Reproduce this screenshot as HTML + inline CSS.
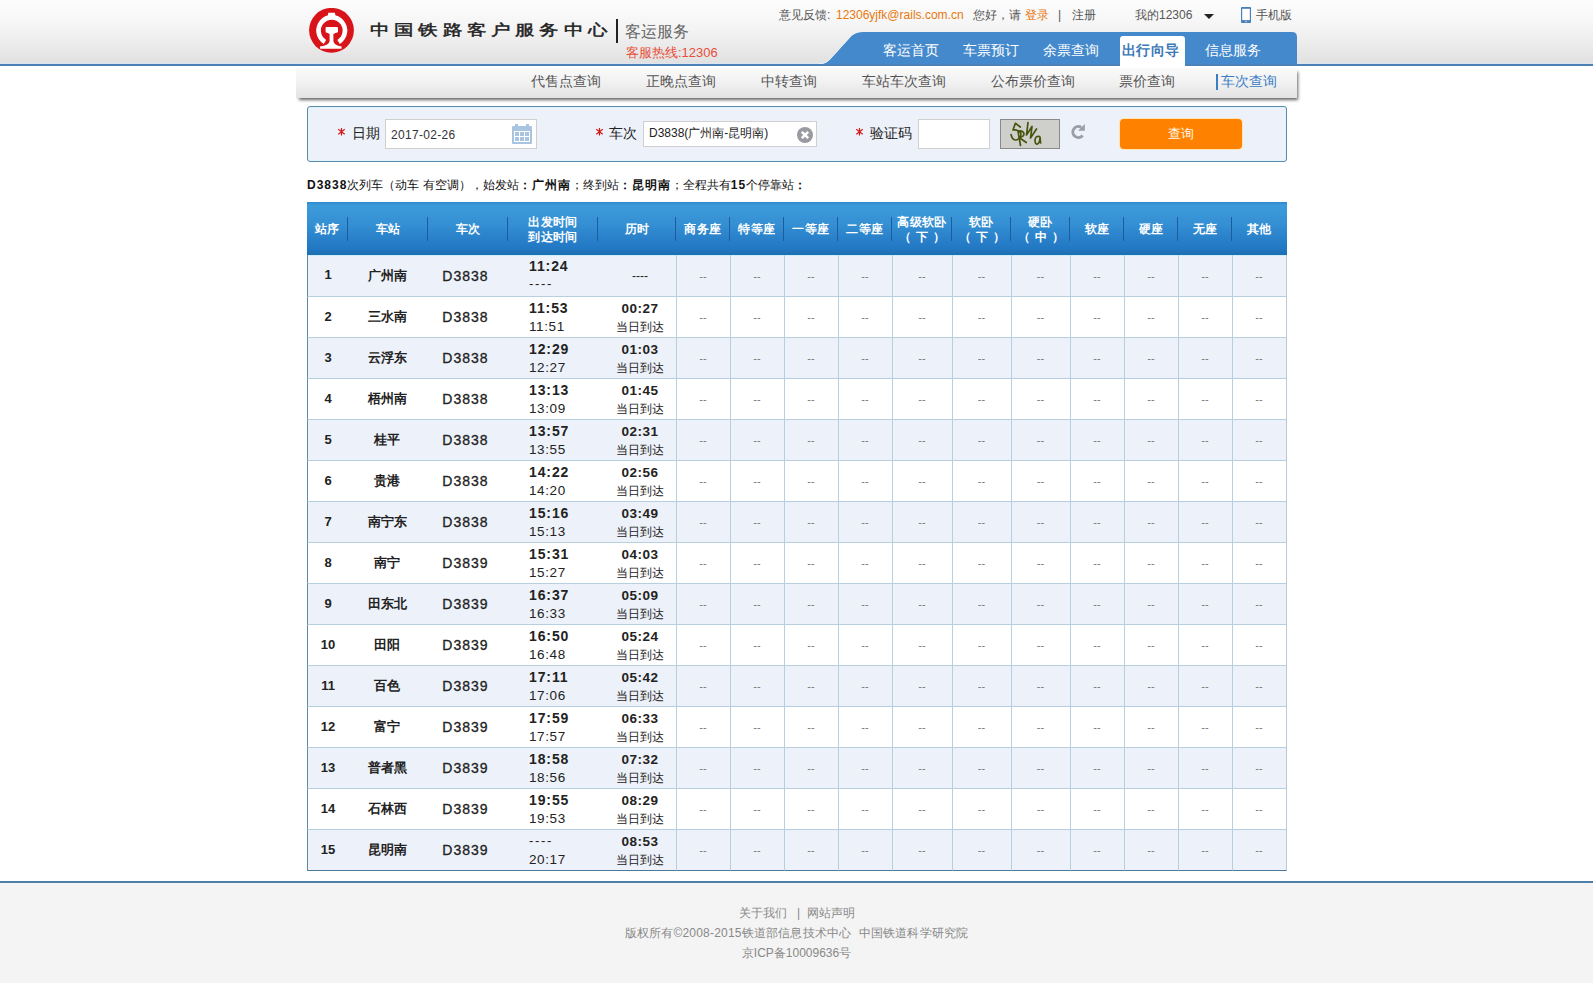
<!DOCTYPE html>
<html><head><meta charset="utf-8">
<style>
*{margin:0;padding:0;box-sizing:border-box}
html,body{width:1593px;height:983px;overflow:hidden;background:#fff;font-family:"Liberation Sans",sans-serif;font-size:12px;color:#333}
.a{position:absolute;white-space:nowrap}
#hdr{position:absolute;left:0;top:0;width:1593px;height:63px;background:linear-gradient(#fdfdfd,#f4f4f4 45%,#e1e1e1)}
#hl0{position:absolute;left:0;top:63px;width:1593px;height:1px;background:#dde6f0}
#hline{position:absolute;left:0;top:64px;width:1593px;height:2px;background:#4a82b8}
#logo{position:absolute;left:309px;top:8px;width:45px;height:45px}
#sitename{position:absolute;left:370px;top:19px;font-size:19px;line-height:22px;font-weight:normal;-webkit-text-stroke:.6px #222;letter-spacing:5.2px;color:#222;transform:scaleY(.77);transform-origin:0 50%}
#vbar{position:absolute;left:616px;top:19px;width:2px;height:24px;background:#222}
#svc{position:absolute;left:625px;top:22px;font-size:16px;line-height:20px;color:#666}
#hot{position:absolute;left:626px;top:45px;font-size:13px;line-height:16px;color:#e94e3a}
.tl{position:absolute;top:8px;font-size:12px;line-height:15px;color:#555;white-space:nowrap}
.or{color:#e8780e}
#tab{position:absolute;left:815px;top:32px;width:482px;height:34px}
.nav{position:absolute;top:42px;font-size:14px;line-height:17px;color:#fff;white-space:nowrap}
#sub{position:absolute;left:296px;top:68px;width:1001px;height:30px;background:linear-gradient(#fafafa,#f2f2f2 45%,#e3e3e3);box-shadow:2px 3px 3px -1px rgba(0,0,0,.6)}
.sn{position:absolute;top:73px;font-size:14px;line-height:17px;color:#555;white-space:nowrap}
#form{position:absolute;left:307px;top:106px;width:980px;height:56px;border:1px solid #5a8aa8;border-radius:3px;background:#edf1f9;box-shadow:inset 0 0 0 1px #dff4fc}
.lbl{position:absolute;top:125px;font-size:14px;line-height:17px;color:#222;white-space:nowrap}
.star{position:absolute;top:126px;font-size:14px;line-height:17px;color:#d9222a}
.inp{position:absolute;background:#fff;border:1px solid #cfcfcf}
#summary{position:absolute;left:307px;top:178px;font-size:12px;line-height:15px;color:#111;white-space:nowrap}
#summary b{letter-spacing:1px}

#tbl{position:absolute;left:307px;top:202px;width:980px;border-collapse:separate;border-spacing:0;table-layout:fixed}
#tbl td.no{border-left:1px solid #5a8aa8}
#tbl td.r{border-right:1px solid #b8c8d4}
#tbl th{height:53px;color:#fff;font-size:12px;font-weight:bold;line-height:15px;background:linear-gradient(#2f88ca,#3d9bda 6%,#3590d4 40%,#2176c2 90%,#1e6fae);padding:2px 0 0;text-align:center;position:relative;box-sizing:border-box}
#tbl th{letter-spacing:.4px}
#tbl th .p{letter-spacing:5px;margin-right:-5px}
#tbl th i{position:absolute;right:0;top:15px;width:1px;height:24px;background:#1d5d9c}
#tbl td{height:41px;text-align:center;padding:0;font-size:12px;color:#222;border-bottom:1px solid #b7cfdf;box-sizing:border-box;vertical-align:middle}
#tbl tr.o td{background:#edf1f9}
#tbl tr.e td{background:#fff}
#tbl tr.f td{height:42px;box-shadow:inset 0 1px #cdeefa}
#tbl tr.l td{border-bottom-color:#4a7a98}
#tbl td.s{border-left:1px solid #b7cfdf;color:#777;font-size:11px;padding-right:1px}
#tbl td.no{font-size:13px;font-weight:bold;padding-bottom:2px}
#tbl td.st{font-size:13px;font-weight:bold;padding-right:2px}
#tbl td.tr{font-size:14px;letter-spacing:1px;padding-right:5px;-webkit-text-stroke:.3px #222}
#tbl td.tm{text-align:left;padding:1px 0 0 21px;line-height:17px}
#tbl td.tm b{font-size:14px;letter-spacing:.9px}
#tbl td.tm .ar{font-size:13.5px;letter-spacing:.6px}
#tbl td.du{line-height:18px;padding:2px 0 0 6px}
#tbl td.du b{font-size:13.5px;letter-spacing:.5px}
#tbl td.du .nt{font-size:12px}
#tbl td.tm .da,#tbl td.tm .dd{font-size:13px;letter-spacing:1.7px;position:relative;top:-1px}
#tbl td.du .dash4{position:relative;top:-1px}
#footer{position:absolute;left:0;top:881px;width:1593px;height:102px;background:#f4f4f4;border-top:2px solid #4f7fa8}
.ft{position:absolute;left:0;width:1593px;text-align:center;font-size:12px;line-height:15px;color:#888;white-space:nowrap}
</style></head><body>

<div id="hdr"></div><div id="hl0"></div><div id="hline"></div>
<svg id="logo" viewBox="0 0 45 45">
<circle cx="22.5" cy="22.3" r="22.4" fill="#d8141a"/>
<path d="M15.9 33.9 A13.2 13.2 0 1 1 29.6 33.9" fill="none" stroke="#fff" stroke-width="4.7"/>
<path d="M18.6 8.6 L19.3 4.8 L25.9 4.8 L26.6 8.6 Z" fill="#fff"/>
<path d="M17.4 19.1 L28.2 19.1 Q29 19.1 29 20 L29 24.2 Q26.2 24.8 24.4 26 L24.4 33 Q24.6 37 31.5 38.3 L32.5 38.3 L32.5 40.8 L11.1 40.8 L11.1 38.3 L12.5 38.3 Q20.4 37 20.6 33 L20.6 26 Q18.8 24.8 16.6 24.2 L16.6 20 Q16.6 19.1 17.4 19.1 Z" fill="#fff"/>
</svg>
<div id="sitename" class="a">中国铁路客户服务中心</div>
<div id="vbar"></div>
<div id="svc" class="a">客运服务</div>
<div id="hot" class="a">客服热线:12306</div>

<div class="tl" style="left:779px">意见反馈:</div>
<div class="tl or" style="left:836px">12306yjfk@rails.com.cn</div>
<div class="tl" style="left:973px">您好，请</div>
<div class="tl or" style="left:1025px">登录</div>
<div class="tl" style="left:1058px">|</div>
<div class="tl" style="left:1072px">注册</div>
<div class="tl" style="left:1135px">我的12306</div>
<svg class="a" style="left:1204px;top:14px" width="10" height="5" viewBox="0 0 10 5"><path d="M0 0 L10 0 L5 5 Z" fill="#222"/></svg>
<svg class="a" style="left:1241px;top:7px" width="10" height="16" viewBox="0 0 10 16"><rect x="0" y="0" width="10" height="16" rx="0.8" fill="#4a7fb8"/><rect x="1.2" y="1.8" width="7.6" height="11.3" fill="#fff"/><rect x="4" y="14.1" width="2" height="1" fill="#b5cce8"/></svg>
<div class="tl" style="left:1256px">手机版</div>

<svg id="tab" viewBox="0 0 482 34">
<path d="M0 32 L4 32 C10 32 13 30 16 26.5 L35 5.5 C38 2 42 0 48 0 L477 0 Q482 0 482 5 L482 34 L0 34 Z" fill="#4489cb"/>
<path d="M4 31.5 C10 31.5 13 29.5 16 26 L35 5 C38 1.5 42 -0.5 48 -0.5 L477 -0.5" fill="none" stroke="#e9f1fb" stroke-width="1"/>
<path d="M0 32 L482 32 L482 34 L0 34 Z" fill="#4a82b8"/>
<path d="M305 34 L305 7 Q305 4 308 4 L367 4 Q370 4 370 7 L370 34 Z" fill="#fff"/>
</svg>
<div class="nav" style="left:883px">客运首页</div>
<div class="nav" style="left:963px">车票预订</div>
<div class="nav" style="left:1043px">余票查询</div>
<div class="nav" style="left:1122px;color:#3a78b8;font-weight:bold;letter-spacing:.3px">出行向导</div>
<div class="nav" style="left:1205px">信息服务</div>

<div id="sub"></div>
<div class="sn" style="left:531px">代售点查询</div>
<div class="sn" style="left:646px">正晚点查询</div>
<div class="sn" style="left:761px">中转查询</div>
<div class="sn" style="left:862px">车站车次查询</div>
<div class="sn" style="left:991px">公布票价查询</div>
<div class="sn" style="left:1119px">票价查询</div>
<div class="a" style="left:1216px;top:74px;width:2px;height:16px;background:#3a7dc4"></div>
<div class="sn" style="left:1221px;color:#3a7dc4">车次查询</div>

<div id="form"></div>
<svg class="a" style="left:338px;top:128px" width="8" height="8" viewBox="0 0 8 8"><path d="M3.5 0 V7.5 M0.3 1.2 L6.7 6.3 M6.7 1.2 L0.3 6.3" stroke="#d41515" stroke-width="1.15"/></svg><div class="lbl" style="left:352px">日期</div>
<div class="inp" style="left:385px;top:119px;width:152px;height:30px"></div>
<div class="a" style="left:391px;top:128px;font-size:12px;line-height:14px;color:#333;letter-spacing:.3px">2017-02-26</div>
<svg class="a" style="left:512px;top:124px" width="20" height="20" viewBox="0 0 20 20">
<rect x="0" y="2" width="20" height="18" rx="1" fill="#a9c4e0"/>
<rect x="3" y="0" width="3" height="4" fill="#a9c4e0"/><rect x="14" y="0" width="3" height="4" fill="#a9c4e0"/>
<g fill="#fff"><rect x="2" y="7" width="16" height="11"/></g>
<g fill="#a9c4e0"><rect x="3" y="8" width="4" height="4"/><rect x="8" y="8" width="4" height="4"/><rect x="13" y="8" width="4" height="4"/><rect x="3" y="13" width="4" height="4"/><rect x="8" y="13" width="4" height="4"/><rect x="13" y="13" width="4" height="4"/></g>
</svg>
<svg class="a" style="left:596px;top:128px" width="8" height="8" viewBox="0 0 8 8"><path d="M3.5 0 V7.5 M0.3 1.2 L6.7 6.3 M6.7 1.2 L0.3 6.3" stroke="#d41515" stroke-width="1.15"/></svg><div class="lbl" style="left:609px">车次</div>
<div class="inp" style="left:643px;top:121px;width:174px;height:26px"></div>
<div class="a" style="left:649px;top:126px;font-size:12px;line-height:15px;color:#222">D3838(广州南-昆明南)</div>
<svg class="a" style="left:797px;top:127px" width="16" height="16" viewBox="0 0 16 16"><circle cx="8" cy="8" r="8" fill="#9a9aa2"/><path d="M4.8 4.8 L11.2 11.2 M11.2 4.8 L4.8 11.2" stroke="#fff" stroke-width="2.4"/></svg>
<svg class="a" style="left:856px;top:128px" width="8" height="8" viewBox="0 0 8 8"><path d="M3.5 0 V7.5 M0.3 1.2 L6.7 6.3 M6.7 1.2 L0.3 6.3" stroke="#d41515" stroke-width="1.15"/></svg><div class="lbl" style="left:870px">验证码</div>
<div class="inp" style="left:918px;top:119px;width:72px;height:30px"></div>
<div class="a" style="left:1000px;top:119px;width:60px;height:30px;background:#cfd0cc;border:1px solid #8a8a8a"></div>
<svg class="a" style="left:1000px;top:118px" width="60" height="32" viewBox="0 0 60 32"><g fill="none" stroke="#46540e" stroke-width="1.7" stroke-linecap="round" stroke-linejoin="round"><path d="M20.3 9 L15.4 5.3 L13 12 Q19 11.5 20.8 15 Q21.5 19.5 17 21.8 Q12.5 23 11 16.5"/><path d="M20.5 27.5 L18 13.2 Q22.5 12 24 15.5 Q24 19 19 19.5 L26.3 24.5"/><path d="M28 4.5 L26.5 17 L32 8.5 L30.5 20 L36.5 11"/><path d="M39.5 18.5 Q35.5 17.5 35 22 Q35 26.8 37.5 26 Q40 25 40 19 L40.6 25"/></g></svg>
<svg class="a" style="left:1071px;top:124px" width="16" height="16" viewBox="0 0 16 16"><path d="M10.15 3.24 A5.5 5.5 0 1 0 11.6 11.5" fill="none" stroke="#9a9ea8" stroke-width="2.9"/><path d="M13.8 0 L13.8 6.8 L7 6.8 Z" fill="#9a9ea8"/></svg>
<div class="a" style="left:1120px;top:119px;width:122px;height:30px;background:#ff8100;border-radius:4px;box-shadow:0 0 0 1px #ffe3b0"></div>
<div class="a" style="left:1120px;top:126px;width:122px;text-align:center;font-size:13px;line-height:16px;color:#fff8e8">查询</div>

<div id="summary"><b>D3838</b>次列车（动车 有空调），始发站<b>：广州南</b>；终到站<b>：昆明南</b>；全程共有<b>15</b>个停靠站<b>：</b></div>
<table id="tbl"><colgroup><col style="width:41px"><col style="width:80px"><col style="width:80px"><col style="width:90px"><col style="width:78px"><col style="width:54px"><col style="width:54px"><col style="width:54px"><col style="width:54px"><col style="width:60px"><col style="width:59px"><col style="width:59px"><col style="width:54px"><col style="width:54px"><col style="width:54px"><col style="width:55px"></colgroup>
<tr><th>站序<i></i></th><th>车站<i></i></th><th>车次<i></i></th><th>出发时间<br>到达时间<i></i></th><th>历时<i></i></th><th>商务座<i></i></th><th>特等座<i></i></th><th>一等座<i></i></th><th>二等座<i></i></th><th>高级软卧<br><span class="p">（下）</span><i></i></th><th>软卧<br><span class="p">（下）</span><i></i></th><th>硬卧<br><span class="p">（中）</span><i></i></th><th>软座<i></i></th><th>硬座<i></i></th><th>无座<i></i></th><th>其他</th></tr>
<tr class="o f"><td class="no">1</td><td class="st">广州南</td><td class="tr">D3838</td><td class="tm"><b>11:24</b><br><span class="da">----</span></td><td class="du"><span class="dash4">----</span></td><td class="s">--</td><td class="s">--</td><td class="s">--</td><td class="s">--</td><td class="s">--</td><td class="s">--</td><td class="s">--</td><td class="s">--</td><td class="s">--</td><td class="s">--</td><td class="s r">--</td></tr>
<tr class="e"><td class="no">2</td><td class="st">三水南</td><td class="tr">D3838</td><td class="tm"><b>11:53</b><br><span class="ar">11:51</span></td><td class="du"><b>00:27</b><br><span class="nt">当日到达</span></td><td class="s">--</td><td class="s">--</td><td class="s">--</td><td class="s">--</td><td class="s">--</td><td class="s">--</td><td class="s">--</td><td class="s">--</td><td class="s">--</td><td class="s">--</td><td class="s r">--</td></tr>
<tr class="o"><td class="no">3</td><td class="st">云浮东</td><td class="tr">D3838</td><td class="tm"><b>12:29</b><br><span class="ar">12:27</span></td><td class="du"><b>01:03</b><br><span class="nt">当日到达</span></td><td class="s">--</td><td class="s">--</td><td class="s">--</td><td class="s">--</td><td class="s">--</td><td class="s">--</td><td class="s">--</td><td class="s">--</td><td class="s">--</td><td class="s">--</td><td class="s r">--</td></tr>
<tr class="e"><td class="no">4</td><td class="st">梧州南</td><td class="tr">D3838</td><td class="tm"><b>13:13</b><br><span class="ar">13:09</span></td><td class="du"><b>01:45</b><br><span class="nt">当日到达</span></td><td class="s">--</td><td class="s">--</td><td class="s">--</td><td class="s">--</td><td class="s">--</td><td class="s">--</td><td class="s">--</td><td class="s">--</td><td class="s">--</td><td class="s">--</td><td class="s r">--</td></tr>
<tr class="o"><td class="no">5</td><td class="st">桂平</td><td class="tr">D3838</td><td class="tm"><b>13:57</b><br><span class="ar">13:55</span></td><td class="du"><b>02:31</b><br><span class="nt">当日到达</span></td><td class="s">--</td><td class="s">--</td><td class="s">--</td><td class="s">--</td><td class="s">--</td><td class="s">--</td><td class="s">--</td><td class="s">--</td><td class="s">--</td><td class="s">--</td><td class="s r">--</td></tr>
<tr class="e"><td class="no">6</td><td class="st">贵港</td><td class="tr">D3838</td><td class="tm"><b>14:22</b><br><span class="ar">14:20</span></td><td class="du"><b>02:56</b><br><span class="nt">当日到达</span></td><td class="s">--</td><td class="s">--</td><td class="s">--</td><td class="s">--</td><td class="s">--</td><td class="s">--</td><td class="s">--</td><td class="s">--</td><td class="s">--</td><td class="s">--</td><td class="s r">--</td></tr>
<tr class="o"><td class="no">7</td><td class="st">南宁东</td><td class="tr">D3838</td><td class="tm"><b>15:16</b><br><span class="ar">15:13</span></td><td class="du"><b>03:49</b><br><span class="nt">当日到达</span></td><td class="s">--</td><td class="s">--</td><td class="s">--</td><td class="s">--</td><td class="s">--</td><td class="s">--</td><td class="s">--</td><td class="s">--</td><td class="s">--</td><td class="s">--</td><td class="s r">--</td></tr>
<tr class="e"><td class="no">8</td><td class="st">南宁</td><td class="tr">D3839</td><td class="tm"><b>15:31</b><br><span class="ar">15:27</span></td><td class="du"><b>04:03</b><br><span class="nt">当日到达</span></td><td class="s">--</td><td class="s">--</td><td class="s">--</td><td class="s">--</td><td class="s">--</td><td class="s">--</td><td class="s">--</td><td class="s">--</td><td class="s">--</td><td class="s">--</td><td class="s r">--</td></tr>
<tr class="o"><td class="no">9</td><td class="st">田东北</td><td class="tr">D3839</td><td class="tm"><b>16:37</b><br><span class="ar">16:33</span></td><td class="du"><b>05:09</b><br><span class="nt">当日到达</span></td><td class="s">--</td><td class="s">--</td><td class="s">--</td><td class="s">--</td><td class="s">--</td><td class="s">--</td><td class="s">--</td><td class="s">--</td><td class="s">--</td><td class="s">--</td><td class="s r">--</td></tr>
<tr class="e"><td class="no">10</td><td class="st">田阳</td><td class="tr">D3839</td><td class="tm"><b>16:50</b><br><span class="ar">16:48</span></td><td class="du"><b>05:24</b><br><span class="nt">当日到达</span></td><td class="s">--</td><td class="s">--</td><td class="s">--</td><td class="s">--</td><td class="s">--</td><td class="s">--</td><td class="s">--</td><td class="s">--</td><td class="s">--</td><td class="s">--</td><td class="s r">--</td></tr>
<tr class="o"><td class="no">11</td><td class="st">百色</td><td class="tr">D3839</td><td class="tm"><b>17:11</b><br><span class="ar">17:06</span></td><td class="du"><b>05:42</b><br><span class="nt">当日到达</span></td><td class="s">--</td><td class="s">--</td><td class="s">--</td><td class="s">--</td><td class="s">--</td><td class="s">--</td><td class="s">--</td><td class="s">--</td><td class="s">--</td><td class="s">--</td><td class="s r">--</td></tr>
<tr class="e"><td class="no">12</td><td class="st">富宁</td><td class="tr">D3839</td><td class="tm"><b>17:59</b><br><span class="ar">17:57</span></td><td class="du"><b>06:33</b><br><span class="nt">当日到达</span></td><td class="s">--</td><td class="s">--</td><td class="s">--</td><td class="s">--</td><td class="s">--</td><td class="s">--</td><td class="s">--</td><td class="s">--</td><td class="s">--</td><td class="s">--</td><td class="s r">--</td></tr>
<tr class="o"><td class="no">13</td><td class="st">普者黑</td><td class="tr">D3839</td><td class="tm"><b>18:58</b><br><span class="ar">18:56</span></td><td class="du"><b>07:32</b><br><span class="nt">当日到达</span></td><td class="s">--</td><td class="s">--</td><td class="s">--</td><td class="s">--</td><td class="s">--</td><td class="s">--</td><td class="s">--</td><td class="s">--</td><td class="s">--</td><td class="s">--</td><td class="s r">--</td></tr>
<tr class="e"><td class="no">14</td><td class="st">石林西</td><td class="tr">D3839</td><td class="tm"><b>19:55</b><br><span class="ar">19:53</span></td><td class="du"><b>08:29</b><br><span class="nt">当日到达</span></td><td class="s">--</td><td class="s">--</td><td class="s">--</td><td class="s">--</td><td class="s">--</td><td class="s">--</td><td class="s">--</td><td class="s">--</td><td class="s">--</td><td class="s">--</td><td class="s r">--</td></tr>
<tr class="o l"><td class="no">15</td><td class="st">昆明南</td><td class="tr">D3839</td><td class="tm"><span class="dd">----</span><br><span class="ar">20:17</span></td><td class="du"><b>08:53</b><br><span class="nt">当日到达</span></td><td class="s">--</td><td class="s">--</td><td class="s">--</td><td class="s">--</td><td class="s">--</td><td class="s">--</td><td class="s">--</td><td class="s">--</td><td class="s">--</td><td class="s">--</td><td class="s r">--</td></tr>
</table>
<div id="footer"></div>
<div class="ft" style="top:906px;left:739px;width:auto;text-align:left">关于我们<span style="margin:0 7px 0 10px">|</span>网站声明</div>
<div class="ft" style="top:926px;letter-spacing:.2px">版权所有©2008-2015铁道部信息技术中心 &nbsp;中国铁道科学研究院</div>
<div class="ft" style="top:946px">京ICP备10009636号</div>
</body></html>
